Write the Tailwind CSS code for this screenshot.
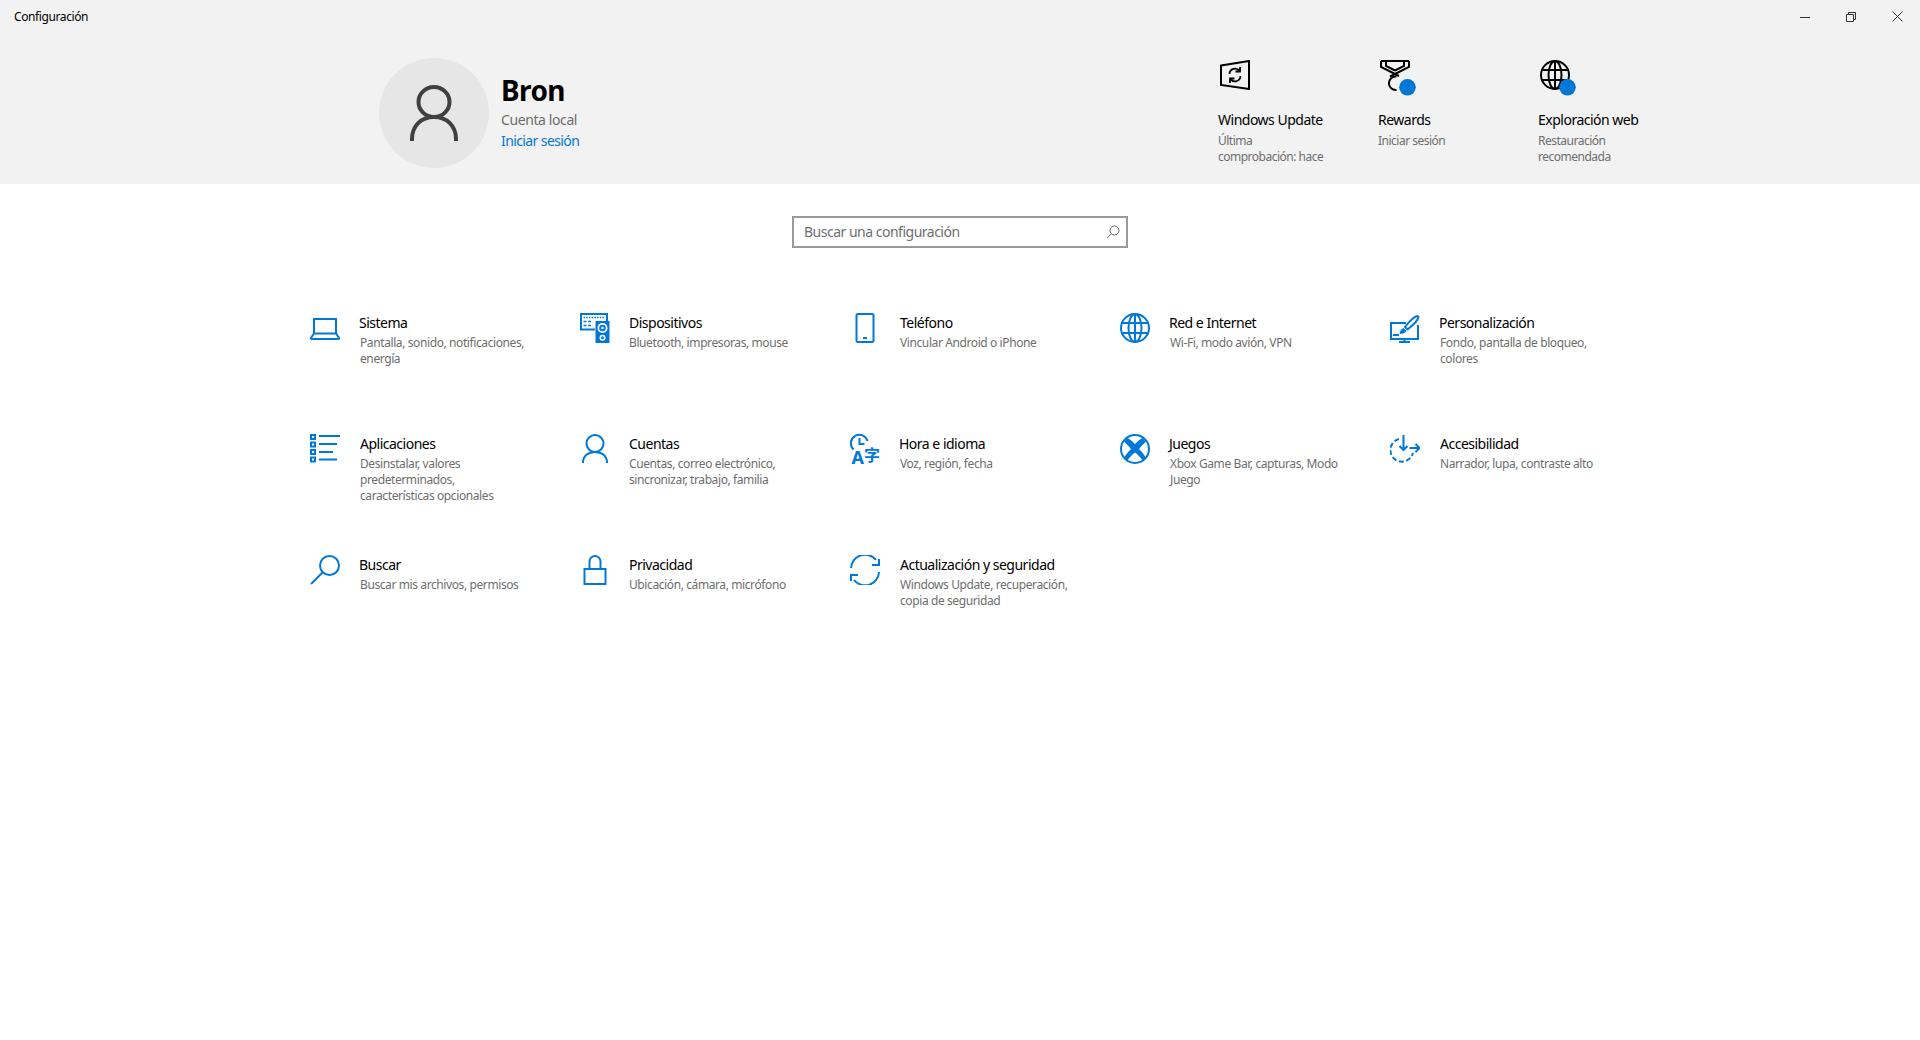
<!DOCTYPE html>
<html lang="es">
  <head>
    <meta charset="UTF-8" />
    <title>Configuración</title>
    <script src="https://cdn.jsdelivr.net/npm/@tailwindcss/browser@4"></script>
  </head>
  <body class="bg-white text-black min-h-screen font-['Noto_Sans',sans-serif]">
    <!-- Cabecera -->
    <header class="bg-[#f2f2f2] h-[184px] flex flex-col">
      <div class="flex items-center justify-between h-[33px] pl-[14px]">
        <span class="text-[12px] tracking-[-0.4px]">Configuración</span>
        <div class="flex">
          <button class="w-[46px] h-[33px] flex items-center justify-center">
            <svg width="10" height="10" viewBox="0 0 10 10" stroke="#333" fill="none"><path d="M0 5.500h10"/></svg>
          </button>
          <button class="w-[46px] h-[33px] flex items-center justify-center">
            <svg width="10" height="10" viewBox="0 0 10 10" stroke="#333" fill="none"><path d="M.5 2.500h7v7h-7zM2.500 2.500v-2h7v7h-2"/></svg>
          </button>
          <button class="w-[46px] h-[33px] flex items-center justify-center">
            <svg width="11" height="11" viewBox="0 0 11 11" stroke="#333" fill="none"><path d="M.5.5l10 10M10.500.5l-10 10"/></svg>
          </button>
        </div>
      </div>
      <div class="flex pl-[379px] pt-[25px]">
        <div class="w-[110px] h-[110px] rounded-full bg-[#e6e6e6] flex items-center justify-center">
          <svg width="48" height="56" viewBox="0 0 48 56" fill="none" stroke="#404040" stroke-width="4">
            <ellipse cx="24" cy="17" rx="15.500" ry="15"/>
            <path d="M2 56v-2C2 41 11 32 24 32s22 9 22 22v2"/>
          </svg>
        </div>
        <div class="ml-[12px] w-[717px] pt-[14px]">
          <div class="text-[28px] leading-[36px] font-bold tracking-[-0.6px]">Bron</div>
          <div class="text-[14px] leading-[20px] mt-[2px] text-[#6e6e6e] tracking-[-0.4px]">Cuenta local</div>
          <div class="text-[14px] leading-[20px] mt-[1px] text-[#0078d7] tracking-[-0.6px]">Iniciar sesión</div>
        </div>
        <div class="w-[160px]">
          <svg width="30" height="30" viewBox="0 0 30 30" fill="none" stroke="#000" stroke-width="2" class="ml-[2px] mt-[2px]">
            <path d="M1 5.500 29 1v28L1 25z"/>
            <path stroke-width="1.800" d="M9.500 14a5.500 5.500 0 0 1 10-3M20.500 16a5.500 5.500 0 0 1-10 3M20 7v4.500h-4.500M10 23v-4.500h4.500"/>
          </svg>
          <div class="text-[14px] leading-[20px] mt-[20px] tracking-[-0.5px]">Windows Update</div>
          <div class="text-[12px] leading-[16px] mt-[3px] text-[#6e6e6e] tracking-[-0.5px]">Última<br />comprobación: hace</div>
        </div>
        <div class="w-[160px]">
          <svg width="38" height="36" viewBox="0 0 38 36" fill="none" class="mt-[2px] ml-[2px]">
            <path stroke="#000" stroke-width="2" d="M1 1h28M1 1v6l18 9M29 1v6L10 16.500M6 1v5l9 4.500M24 1v5l-9 4.500"/>
            <path stroke="#000" stroke-width="2" d="M16.500 16.500a6.800 6.800 0 1 0 0 13.500"/>
            <circle cx="27.500" cy="27.300" r="8.300" fill="#0078d7"/>
          </svg>
          <div class="text-[14px] leading-[20px] mt-[14px] tracking-[-0.5px]">Rewards</div>
          <div class="text-[12px] leading-[16px] mt-[3px] text-[#6e6e6e] tracking-[-0.5px]">Iniciar sesión</div>
        </div>
        <div class="w-[160px]">
          <svg width="38" height="36" viewBox="0 0 38 36" fill="none" class="mt-[2px] ml-[2px]">
            <g stroke="#000" stroke-width="2">
              <circle cx="15" cy="15" r="14"/>
              <ellipse cx="15" cy="15" rx="6.500" ry="14"/>
              <path d="M1 10h28M1 20h28M15 1v28"/>
            </g>
            <circle cx="27.500" cy="27.300" r="8.300" fill="#0078d7"/>
          </svg>
          <div class="text-[14px] leading-[20px] mt-[14px] tracking-[-0.5px]">Exploración web</div>
          <div class="text-[12px] leading-[16px] mt-[3px] text-[#6e6e6e] tracking-[-0.5px] w-[90px]">Restauración recomendada</div>
        </div>
      </div>
    </header>

    <main>
      <div class="flex justify-center pt-[32px]">
        <div class="w-[336px] h-[32px] border-2 border-[#999] flex items-center justify-between pl-[10px] pr-[6px]">
          <span class="text-[14px] text-[#6e6e6e] tracking-[-0.5px] mb-[2px]">Buscar una configuración</span>
          <svg width="14" height="14" viewBox="0 0 14 14" fill="none" stroke="#666"><circle cx="8.500" cy="5.500" r="4.500"/><path d="M5.500 8.500 1 13"/></svg>
        </div>
      </div>

      <div class="grid grid-cols-[repeat(5,270px)] auto-rows-[121px] pl-[310px] pt-[65px]">
        <!-- Sistema -->
        <a class="flex gap-[19px]">
          <svg class="shrink-0" width="30" height="30" viewBox="0 0 30 30" fill="none" stroke="#0078d7" stroke-width="2">
            <path d="M4 20.500V6h22v14.500M4 20.500.9 25c0 .6.4 1 1 1h26.200c.6 0 1-.4 1-1L26 20.500z"/>
          </svg>
          <div><div class="text-[14px] leading-[20px] tracking-[-0.5px]">Sistema</div><div class="text-[12px] leading-[16px] mt-[2px] ml-[1px] text-[#6e6e6e] w-[190px] tracking-[-0.4px]">Pantalla, sonido, notificaciones, energía</div></div>
        </a>
        <!-- Dispositivos -->
        <a class="flex gap-[19px]">
          <svg class="shrink-0" width="30" height="30" viewBox="0 0 30 30" fill="none" stroke="#0078d7" stroke-width="2">
            <path d="M15 16.500H1V1h26v7"/>
            <path stroke-width="1.500" stroke-dasharray="1.500 1.200" d="M3.500 4.500h21"/>
            <path stroke-width="1.500" d="M3.500 8.500h3M8 8.500h3M3.500 12.500h3M8 12.500h3"/>
            <rect x="15.500" y="8" width="14" height="22" fill="#0078d7" stroke="none"/>
            <circle cx="22.500" cy="15" r="5" fill="#fff" stroke="none"/>
            <circle cx="22.500" cy="15" r="3.300" fill="#0078d7" stroke="none"/>
            <circle cx="22.500" cy="15" r="1.300" fill="#fff" stroke="none"/>
            <circle cx="22.500" cy="24.700" r="3" fill="#fff" stroke="none"/>
            <circle cx="22.500" cy="24.700" r="1.500" fill="#0078d7" stroke="none"/>
          </svg>
          <div><div class="text-[14px] leading-[20px] tracking-[-0.5px]">Dispositivos</div><div class="text-[12px] leading-[16px] mt-[2px] text-[#6e6e6e] w-[190px] tracking-[-0.4px]">Bluetooth, impresoras, mouse</div></div>
        </a>
        <!-- Teléfono -->
        <a class="flex gap-[20px]">
          <svg class="shrink-0" width="30" height="30" viewBox="0 0 30 30" fill="none" stroke="#0078d7" stroke-width="2">
            <rect x="6.500" y="1" width="17" height="28" rx="1.500"/>
            <path d="M13 25h4"/>
          </svg>
          <div><div class="text-[14px] leading-[20px] tracking-[-0.5px]">Teléfono</div><div class="text-[12px] leading-[16px] mt-[2px] text-[#6e6e6e] w-[190px] tracking-[-0.4px]">Vincular Android o iPhone</div></div>
        </a>
        <!-- Red e Internet -->
        <a class="flex gap-[19px]">
          <svg class="shrink-0" width="30" height="30" viewBox="0 0 30 30" fill="none" stroke="#0078d7" stroke-width="2">
            <circle cx="15" cy="15" r="14"/><ellipse cx="15" cy="15" rx="6.500" ry="14"/>
            <path d="M1 10h28M1 20h28M15 1v28"/>
          </svg>
          <div><div class="text-[14px] leading-[20px] tracking-[-0.5px]">Red e Internet</div><div class="text-[12px] leading-[16px] mt-[2px] ml-[1px] text-[#6e6e6e] w-[190px] tracking-[-0.4px]">Wi-Fi, modo avión, VPN</div></div>
        </a>
        <!-- Personalización -->
        <a class="flex gap-[19px]">
          <svg class="shrink-0" width="30" height="30" viewBox="0 0 30 30" fill="none" stroke="#0078d7" stroke-width="2">
            <path d="M16 10H1v16h27V12M3 22h6M14.500 26v3M9 29h11"/>
            <path d="M27.500 3c-3 .5-9 6.500-12.500 11l2.500 2.500C22 13 28 7 28.500 4z" fill="#fff"/>
            <path d="M13.500 15c-2 .5-3.500 2.500-4 6 3 0 6-1 7-3z" fill="#0078d7" stroke="none"/>
          </svg>
          <div><div class="text-[14px] leading-[20px] tracking-[-0.5px]">Personalización</div><div class="text-[12px] leading-[16px] mt-[2px] ml-[1px] text-[#6e6e6e] w-[190px] tracking-[-0.4px]">Fondo, pantalla de bloqueo,<br />colores</div></div>
        </a>
        <!-- Aplicaciones -->
        <a class="flex gap-[20px]">
          <svg class="shrink-0" width="30" height="30" viewBox="0 0 30 30" fill="none" stroke="#0078d7" stroke-width="2">
            <path d="M9 2h21M9 10h18M9 18h14M9 25.500h18"/>
            <g fill="#fff" stroke-width="2">
              <rect x="1" y="1" width="4" height="4"/><rect x="1" y="8.500" width="4" height="4"/><rect x="1" y="16" width="4" height="4"/><rect x="1" y="23.500" width="4" height="4"/>
            </g>
          </svg>
          <div><div class="text-[14px] leading-[20px] tracking-[-0.5px]">Aplicaciones</div><div class="text-[12px] leading-[16px] mt-[2px] text-[#6e6e6e] w-[170px] tracking-[-0.4px]">Desinstalar, valores predeterminados, características opcionales</div></div>
        </a>
        <!-- Cuentas -->
        <a class="flex gap-[19px]">
          <svg class="shrink-0" width="30" height="30" viewBox="0 0 30 30" fill="none" stroke="#0078d7" stroke-width="2">
            <circle cx="15" cy="9.500" r="8.500"/>
            <path d="M3 29v-.5c0-6.500 5-10.500 12-10.500s12 4 12 10.500v.5"/>
          </svg>
          <div><div class="text-[14px] leading-[20px] tracking-[-0.5px]">Cuentas</div><div class="text-[12px] leading-[16px] mt-[2px] text-[#6e6e6e] w-[190px] tracking-[-0.4px]">Cuentas, correo electrónico, sincronizar, trabajo, familia</div></div>
        </a>
        <!-- Hora e idioma -->
        <a class="flex gap-[19px]">
          <svg class="shrink-0 overflow-visible" width="30" height="30" viewBox="0 0 30 30" fill="none" stroke="#0078d7" stroke-width="2">
            <path d="M3.500 15.500A8.500 8.500 0 1 1 17.500 7"/><path d="M9.500 4v6h5"/>
            <text x="1.500" y="29.500" font-size="18" font-weight="700" fill="#0078d7" stroke="none" font-family="Noto Sans">A</text>
            <text x="14" y="27" font-size="16" font-weight="700" fill="#0078d7" stroke="none" font-family="Noto Sans CJK SC">字</text>
          </svg>
          <div><div class="text-[14px] leading-[20px] tracking-[-0.5px]">Hora e idioma</div><div class="text-[12px] leading-[16px] mt-[2px] ml-[1px] text-[#6e6e6e] w-[190px] tracking-[-0.4px]">Voz, región, fecha</div></div>
        </a>
        <!-- Juegos -->
        <a class="flex gap-[19px]">
          <svg class="shrink-0" width="30" height="30" viewBox="0 0 30 30" fill="none" stroke="#0078d7" stroke-width="2">
            <circle cx="15" cy="15" r="14"/>
            <path fill="#0078d7" stroke="none" d="M15 10C13 8 10.500 5.500 7.500 4L4 7.500C6 9.500 9 12.500 11 15 8 18 5 21.500 4 24L7 27C9 24 12 20.500 15 18.500 18 20.500 21 24 23 27L26 24C25 21.500 22 18 19 15 21 12.500 24 9.500 26 7.500L22.500 4C19.500 5.500 17 8 15 10z"/>
          </svg>
          <div><div class="text-[14px] leading-[20px] tracking-[-0.5px]">Juegos</div><div class="text-[12px] leading-[16px] mt-[2px] ml-[1px] text-[#6e6e6e] w-[190px] tracking-[-0.4px]">Xbox Game Bar, capturas, Modo Juego</div></div>
        </a>
        <!-- Accesibilidad -->
        <a class="flex gap-[20px]">
          <svg class="shrink-0" width="30" height="30" viewBox="0 0 30 30" fill="none" stroke="#0078d7" stroke-width="2">
            <path stroke-dasharray="5 2.500" d="M9 5A11.500 11.500 0 1 0 23 19"/>
            <path d="M13.500 1v15M9.500 12l4 4 4-4M19.500 14H29M25.500 10l4 4-4 4"/>
          </svg>
          <div><div class="text-[14px] leading-[20px] tracking-[-0.5px]">Accesibilidad</div><div class="text-[12px] leading-[16px] mt-[2px] text-[#6e6e6e] w-[190px] tracking-[-0.4px]">Narrador, lupa, contraste alto</div></div>
        </a>
        <!-- Buscar -->
        <a class="flex gap-[19px]">
          <svg class="shrink-0" width="30" height="30" viewBox="0 0 30 30" fill="none" stroke="#0078d7" stroke-width="2">
            <circle cx="19.500" cy="10.500" r="9.500"/><path d="M12.500 17.500 1 29"/>
          </svg>
          <div><div class="text-[14px] leading-[20px] tracking-[-0.5px]">Buscar</div><div class="text-[12px] leading-[16px] mt-[2px] ml-[1px] text-[#6e6e6e] w-[190px] tracking-[-0.4px]">Buscar mis archivos, permisos</div></div>
        </a>
        <!-- Privacidad -->
        <a class="flex gap-[19px]">
          <svg class="shrink-0" width="30" height="30" viewBox="0 0 30 30" fill="none" stroke="#0078d7" stroke-width="2">
            <rect x="4.500" y="14" width="21" height="15"/><path d="M9.500 14V6.500a5.500 5.500 0 0 1 11 0V14"/>
          </svg>
          <div><div class="text-[14px] leading-[20px] tracking-[-0.5px]">Privacidad</div><div class="text-[12px] leading-[16px] mt-[2px] text-[#6e6e6e] w-[190px] tracking-[-0.4px]">Ubicación, cámara, micrófono</div></div>
        </a>
        <!-- Actualización y seguridad -->
        <a class="flex gap-[20px]">
          <svg class="shrink-0" width="30" height="30" viewBox="0 0 30 30" fill="none" stroke="#0078d7" stroke-width="2">
            <path d="M1 13a14 14 0 0 1 25-8M29 17a14 14 0 0 1-25 8M29 4v6h-7M1 26v-6h7"/>
          </svg>
          <div><div class="text-[14px] leading-[20px] tracking-[-0.5px]">Actualización y seguridad</div><div class="text-[12px] leading-[16px] mt-[2px] text-[#6e6e6e] w-[190px] tracking-[-0.4px]">Windows Update, recuperación, copia de seguridad</div></div>
        </a>
      </div>
    </main>
  </body>
</html>
